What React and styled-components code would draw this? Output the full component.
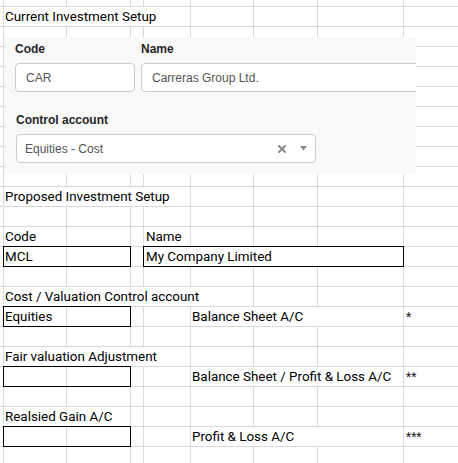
import React from 'react';
import styled, { createGlobalStyle } from 'styled-components';

const GlobalStyle = createGlobalStyle`
  html, body { margin: 0; padding: 0; background: #fff; }
  body { font-family: Roboto, "Liberation Sans", Arial, sans-serif; }
`;

const COL_COUNT = 9;
const ROW_COUNT = 24;

const Sheet = styled.div`
  position: relative;
  width: 458px;
  height: 463px;
  overflow: hidden;
  display: grid;
  grid-template-columns: 4px 63px 64px 13px 47px 63px 64px 86px 80px;
  grid-template-rows: 7px repeat(23, 20px);
  font-family: Roboto, "Liberation Sans", Arial, sans-serif;
  font-size: 13.4px;
  color: #000;
`;

const GridCell = styled.div`
  box-sizing: border-box;
  border-right: 1px solid #dadada;
  border-bottom: 1px solid #dadada;
  grid-column: ${(p) => p.$c};
  grid-row: ${(p) => p.$r};
`;

const CellText = styled.div`
  grid-column: ${(p) => p.$col};
  grid-row: ${(p) => p.$row};
  margin: 0 1px 1px 0;
  background: #fff;
  display: flex;
  align-items: flex-end;
  padding-left: ${(p) => p.$indent ?? 1}px;
  line-height: 18px;
  white-space: nowrap;
  z-index: 1;
`;

const MarkText = styled(CellText)`
  font-size: 12px;
  color: #222;
`;

const BoxedCell = styled.div`
  grid-column: ${(p) => p.$col};
  grid-row: ${(p) => p.$row};
  margin: -1px 0 0 -1px;
  border: 1px solid #000;
  background: ${(p) => (p.$solid ? '#fff' : 'transparent')};
  display: flex;
  align-items: flex-end;
  padding-left: ${(p) => p.$indent ?? 1}px;
  line-height: 18px;
  white-space: nowrap;
  z-index: 2;
`;

/* Embedded screenshot of the current setup form, floating over the sheet */
const Picture = styled.div`
  position: absolute;
  left: 5px;
  top: 37px;
  width: 411px;
  height: 137px;
  box-sizing: border-box;
  padding: 5px 0 0 10px;
  background: #f9f9f9;
  overflow: hidden;
  z-index: 5;
  font-family: "Liberation Sans", Arial, sans-serif;
`;

const FormRow = styled.div`
  display: flex;
  gap: 6px;
  margin-top: ${(p) => p.$top || 0}px;
  margin-left: ${(p) => p.$left || 0}px;
`;

const FormGroup = styled.div`
  display: flex;
  flex-direction: column;
  flex-shrink: 0;
  width: ${(p) => p.$w}px;
`;

const FormLabel = styled.div`
  font-size: 12px;
  font-weight: bold;
  color: #262626;
  line-height: 14px;
  height: 14px;
  margin-bottom: 7px;
`;

const TextInput = styled.div`
  box-sizing: border-box;
  height: 29px;
  border: 1px solid #ccc;
  border-radius: 4px;
  background: #fff;
  padding: 0 10px;
  display: flex;
  align-items: center;
  font-size: 12px;
  color: #555;
`;

const SelectBox = styled(TextInput)`
  padding: 0 8px;
  justify-content: space-between;
`;

const SelectIcons = styled.div`
  display: flex;
  align-items: center;
  gap: 14px;
`;

const ClearIcon = () => (
  <svg width="8" height="8" viewBox="0 0 8 8">
    <path d="M1 1 L7 7 M7 1 L1 7" stroke="#888" strokeWidth="2" strokeLinecap="square" />
  </svg>
);

const CaretIcon = () => (
  <svg width="7" height="5" viewBox="0 0 7 5">
    <path d="M0 0 H7 L3.5 4.5 Z" fill="#888" />
  </svg>
);

const proposedRows = [
  { row: 17, value: 'Equities', type: 'Balance Sheet A/C', mark: '*' },
  { row: 20, value: '', type: 'Balance Sheet / Profit & Loss A/C', mark: '**' },
  { row: 23, value: '', type: 'Profit & Loss A/C', mark: '***' },
];

const headings = [
  { row: 2, col: '2 / 6', text: 'Current Investment Setup' },
  { row: 11, col: '2 / 6', text: 'Proposed Investment Setup' },
  { row: 13, col: '2 / 3', text: 'Code' },
  { row: 13, col: '5 / 6', text: 'Name', indent: 2 },
  { row: 16, col: '2 / 7', text: 'Cost / Valuation Control account' },
  { row: 19, col: '2 / 6', text: 'Fair valuation Adjustment' },
  { row: 22, col: '2 / 4', text: 'Realsied Gain A/C' },
];

export default function App() {
  const cells = [];
  for (let r = 1; r <= ROW_COUNT; r++) {
    for (let c = 1; c <= COL_COUNT; c++) {
      cells.push(<GridCell key={`${r}-${c}`} $r={r} $c={c} />);
    }
  }

  return (
    <>
      <GlobalStyle />
      <Sheet>
        {cells}

        {headings.map((h) => (
          <CellText key={h.text} $row={h.row} $col={h.col} $indent={h.indent}>
            {h.text}
          </CellText>
        ))}

        <BoxedCell $row={14} $col="2 / 4">MCL</BoxedCell>
        <BoxedCell $row={14} $col="5 / 9" $solid $indent={2}>
          My Company Limited
        </BoxedCell>

        {proposedRows.map((p) => (
          <React.Fragment key={p.row}>
            <BoxedCell $row={p.row} $col="2 / 4">
              {p.value}
            </BoxedCell>
            <CellText $row={p.row} $col="6 / 9">
              {p.type}
            </CellText>
            <MarkText $row={p.row} $col="9 / 10" $indent={2}>
              {p.mark}
            </MarkText>
          </React.Fragment>
        ))}

        <Picture>
          <FormRow>
            <FormGroup $w={120}>
              <FormLabel>Code</FormLabel>
              <TextInput>CAR</TextInput>
            </FormGroup>
            <FormGroup $w={300}>
              <FormLabel>Name</FormLabel>
              <TextInput>Carreras Group Ltd.</TextInput>
            </FormGroup>
          </FormRow>
          <FormRow $top={21} $left={1}>
            <FormGroup $w={300}>
              <FormLabel>Control account</FormLabel>
              <SelectBox>
                <span>Equities - Cost</span>
                <SelectIcons>
                  <ClearIcon />
                  <CaretIcon />
                </SelectIcons>
              </SelectBox>
            </FormGroup>
          </FormRow>
        </Picture>
      </Sheet>
    </>
  );
}
